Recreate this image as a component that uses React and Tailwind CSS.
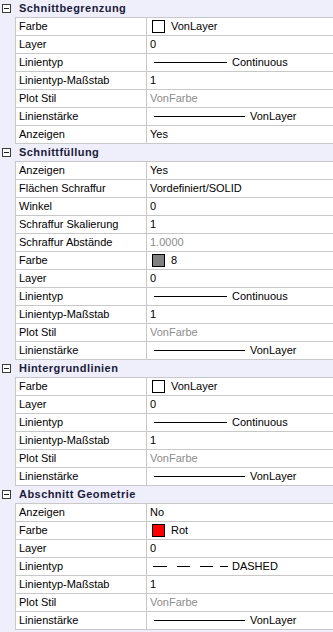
import React from 'react';

const sections = [
  {
    title: 'Schnittbegrenzung',
    rows: [
      { name: 'Farbe', swatch: '#ffffff', value: 'VonLayer' },
      { name: 'Layer', value: '0' },
      { name: 'Linientyp', line: 'solid', value: 'Continuous' },
      { name: 'Linientyp-Maßstab', value: '1' },
      { name: 'Plot Stil', value: 'VonFarbe', muted: true },
      { name: 'Linienstärke', line: 'long', value: 'VonLayer' },
      { name: 'Anzeigen', value: 'Yes' },
    ],
  },
  {
    title: 'Schnittfüllung',
    rows: [
      { name: 'Anzeigen', value: 'Yes' },
      { name: 'Flächen Schraffur', value: 'Vordefiniert/SOLID' },
      { name: 'Winkel', value: '0' },
      { name: 'Schraffur Skalierung', value: '1' },
      { name: 'Schraffur Abstände', value: '1.0000', muted: true },
      { name: 'Farbe', swatch: '#808080', value: '8' },
      { name: 'Layer', value: '0' },
      { name: 'Linientyp', line: 'solid', value: 'Continuous' },
      { name: 'Linientyp-Maßstab', value: '1' },
      { name: 'Plot Stil', value: 'VonFarbe', muted: true },
      { name: 'Linienstärke', line: 'long', value: 'VonLayer' },
    ],
  },
  {
    title: 'Hintergrundlinien',
    rows: [
      { name: 'Farbe', swatch: '#ffffff', value: 'VonLayer' },
      { name: 'Layer', value: '0' },
      { name: 'Linientyp', line: 'solid', value: 'Continuous' },
      { name: 'Linientyp-Maßstab', value: '1' },
      { name: 'Plot Stil', value: 'VonFarbe', muted: true },
      { name: 'Linienstärke', line: 'long', value: 'VonLayer' },
    ],
  },
  {
    title: 'Abschnitt Geometrie',
    rows: [
      { name: 'Anzeigen', value: 'No' },
      { name: 'Farbe', swatch: '#ff0000', value: 'Rot' },
      { name: 'Layer', value: '0' },
      { name: 'Linientyp', line: 'dashed', value: 'DASHED' },
      { name: 'Linientyp-Maßstab', value: '1' },
      { name: 'Plot Stil', value: 'VonFarbe', muted: true },
      { name: 'Linienstärke', line: 'long', value: 'VonLayer' },
    ],
  },
];

const Value = ({ row }) => {
  if (row.swatch) {
    return (
      <>
        <span className="ml-[2px] w-[13px] h-[13px] border border-black shrink-0" style={{ backgroundColor: row.swatch }} />
        <span className="ml-[6px]">{row.value}</span>
      </>
    );
  }
  if (row.line === 'solid') {
    return (
      <>
        <span className="ml-[4px] w-[73px] h-px bg-black shrink-0" />
        <span className="ml-[5px]">{row.value}</span>
      </>
    );
  }
  if (row.line === 'long') {
    return (
      <>
        <span className="ml-[4px] w-[91px] h-px bg-black shrink-0" />
        <span className="ml-[5px]">{row.value}</span>
      </>
    );
  }
  if (row.line === 'dashed') {
    return (
      <>
        <svg width="78" height="3" className="ml-[3px] shrink-0">
          <line x1="0" y1="1.5" x2="14" y2="1.5" stroke="black" />
          <line x1="24" y1="1.5" x2="37" y2="1.5" stroke="black" />
          <line x1="47" y1="1.5" x2="60" y2="1.5" stroke="black" />
          <line x1="67" y1="1.5" x2="75" y2="1.5" stroke="black" />
        </svg>
        <span className="ml-[1px]">{row.value}</span>
      </>
    );
  }
  return <span className={row.muted ? 'text-[#8c8c8c]' : ''}>{row.value}</span>;
};

export default function App() {
  return (
    <div className="w-[333px] h-[632px] bg-[#efeffb] text-[11px] leading-none text-black font-['Liberation_Sans',Arial,sans-serif] overflow-hidden">
      {sections.map((s) => (
        <div key={s.title}>
          {/* group header */}
          <div className="flex h-[18px]">
            <div className="w-[15px] flex pt-[4px] pl-[2px]">
              <div className="w-[9px] h-[9px] border border-[#3c3c3c] bg-white flex items-center justify-center">
                <div className="w-[5px] h-px bg-[#202020]" />
              </div>
            </div>
            <div className="flex-1 flex items-center border-b border-[#c8c8c8] pl-[4px] pb-px font-bold tracking-[0.45px] text-[#1a1a3a]">
              {s.title}
            </div>
          </div>
          {s.rows.map((r, i) => (
            <div key={i} className="flex h-[18px] ml-[15px] bg-white border-l border-b border-[#c8c8c8]">
              <div className="w-[131px] border-r border-[#c8c8c8] pl-[3px] flex items-center pb-px">{r.name}</div>
              <div className="flex-1 pl-[3px] flex items-center pb-px">
                <Value row={r} />
              </div>
            </div>
          ))}
        </div>
      ))}
    </div>
  );
}
